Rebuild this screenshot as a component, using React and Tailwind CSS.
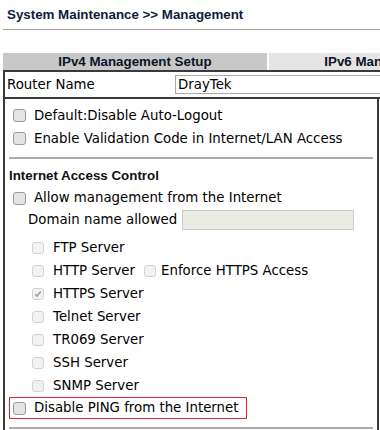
import React from 'react';

const sans = "font-['DejaVu_Sans',sans-serif] text-[13.33px] text-black";
const bold = "font-['Liberation_Sans',Arial,sans-serif] font-bold text-[13.33px]";

function Check({ disabled, checked }) {
  return (
    <span
      className={
        disabled
          ? 'relative inline-block w-[12px] h-[12px] shrink-0 rounded-[3px] border border-[#d2d2d2] bg-[#f2f2f2]'
          : 'relative inline-block w-[13px] h-[13px] shrink-0 rounded-[3px] border border-[#9a9a9a] bg-[#e4e4e4]'
      }
    >
      {checked && (
        <svg viewBox="0 0 12 12" className="absolute left-0 top-0 w-[10px] h-[10px]">
          <path d="M2.5 6.2 L4.8 8.5 L9.3 3" fill="none" stroke="#9c9c9c" strokeWidth="1.8" />
        </svg>
      )}
    </span>
  );
}

function Row({ label }) {
  return (
    <div className="flex items-center h-[23px] pl-[8px]">
      <Check />
      <span className={sans + ' ml-[8px] whitespace-nowrap'}>{label}</span>
    </div>
  );
}

function Server({ label, checked, children }) {
  return (
    <div className="flex items-center h-[23px] pl-[27px]">
      <Check disabled checked={checked} />
      <span className={sans + ' ml-[9px] whitespace-nowrap'}>{label}</span>
      {children}
    </div>
  );
}

export default function App() {
  return (
    <div className="w-[380px] h-[430px] overflow-hidden bg-white">
      <div className="h-[29px] pl-[7px] pt-[1px]">
        <span className={bold + ' text-[#0d1d3a] leading-[16px] whitespace-nowrap'}>System Maintenance &gt;&gt; Management</span>
      </div>
      <div className="ml-[3px] h-[1px] bg-[#9e9e9e]" />

      <div className="ml-[3px] mt-[23px] w-[540px]">
        {/* tabs */}
        <div className="flex h-[17px] gap-[2px]">
          <div className={bold + ' w-[264px] bg-[#c8c8c8] text-[#0a1428] flex items-center justify-center leading-none whitespace-nowrap'}>
            IPv4 Management Setup
          </div>
          <div className={bold + ' w-[264px] bg-[#e4e4e4] text-[#0a1428] flex items-center justify-center leading-none whitespace-nowrap'}>
            IPv6 Management Setup
          </div>
        </div>

        {/* router name */}
        <div className="flex items-center h-[29px] border-y-2 border-l-2 border-[#3a3a3a]">
          <span className={sans + ' pl-[2px] w-[170px]'}>Router Name</span>
          <div className={sans + ' h-[19px] flex-1 border border-[#a9a9a9] flex items-center pl-[2px]'}>DrayTek</div>
        </div>

        {/* options */}
        <div className="w-[376px] h-[340px] border-x-2 border-[#3a3a3a] pt-[5px]">
          <Row label="Default:Disable Auto-Logout" />
          <Row label="Enable Validation Code in Internet/LAN Access" />
          <div className="mt-[7px] mx-[4px] h-[2px] bg-[#ababab]" />

          <div className={bold + ' mt-[7px] h-[20px] flex items-center pl-[4px] text-[#111]'}>Internet Access Control</div>
          <div className="flex items-center h-[23px] pl-[8px] pt-[1px]">
            <Check />
            <span className={sans + ' ml-[8px] whitespace-nowrap'}>Allow management from the Internet</span>
          </div>
          <div className="flex items-center h-[21px] pl-[23px]">
            <span className={sans + ' whitespace-nowrap'}>Domain name allowed</span>
            <div className="ml-[5px] w-[172px] h-[20px] border border-[#c9c9c9] bg-[#ebebe4]" />
          </div>

          <div className="mt-[6px]">
            <Server label="FTP Server" />
            <Server label="HTTP Server">
              <span className="ml-[9px] flex"><Check disabled /></span>
              <span className={sans + ' ml-[5px] whitespace-nowrap'}>Enforce HTTPS Access</span>
            </Server>
            <Server label="HTTPS Server" checked />
            <Server label="Telnet Server" />
            <Server label="TR069 Server" />
            <Server label="SSH Server" />
            <Server label="SNMP Server" />
          </div>

          <div className="ml-[4px] w-[238px] h-[22px] border border-[#e3202b] flex items-center pl-[3px]">
            <Check />
            <span className={sans + ' ml-[8px] whitespace-nowrap'}>Disable PING from the Internet</span>
          </div>
          <div className="mt-[8px] mx-[4px] h-[2px] bg-[#ababab]" />
        </div>
      </div>
    </div>
  );
}
